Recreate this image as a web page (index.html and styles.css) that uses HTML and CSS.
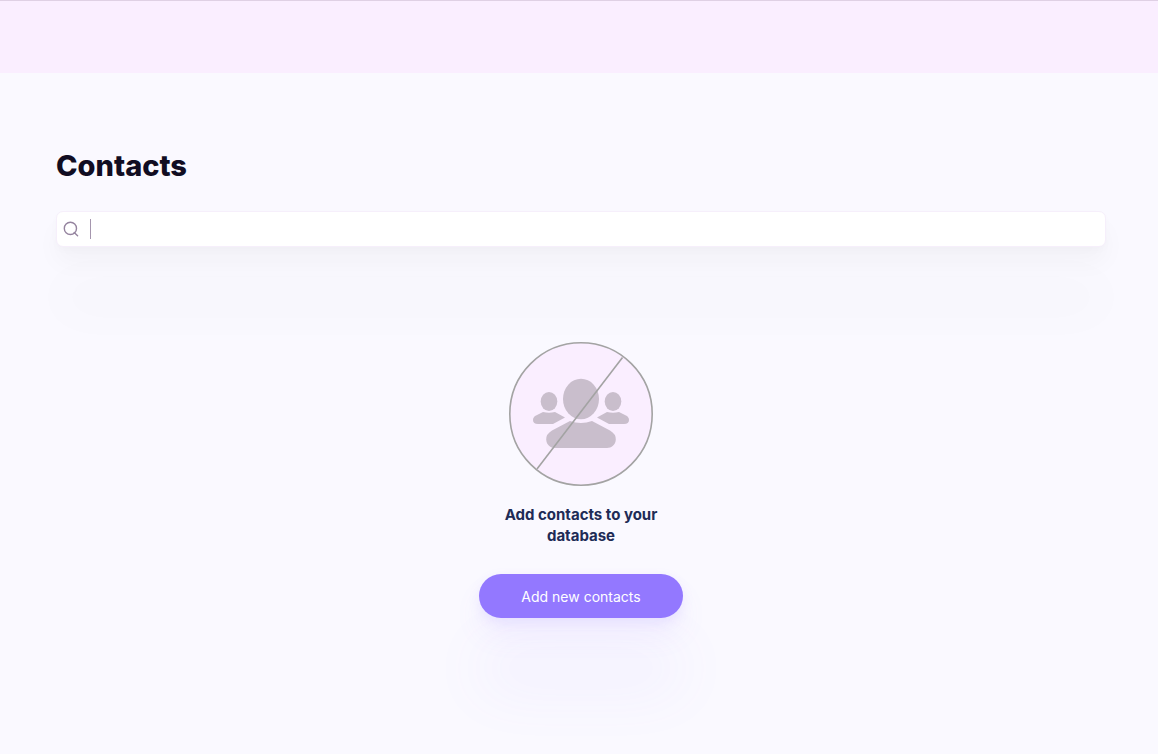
FILE: index.html
```html
<!DOCTYPE html>
<html lang="en">
<head>
<meta charset="utf-8">
<meta name="viewport" content="width=device-width, initial-scale=1">
<title>Contacts</title>
<link rel="stylesheet" href="styles.css">
</head>
<body>
<header class="topbar"></header>
<main class="page">
  <h1 class="title">Contacts</h1>
  <form class="search" role="search">
    <label class="search-label" for="search" aria-label="Search contacts">
      <svg width="16" height="16" viewBox="0 0 16 16" fill="none" stroke="#95849f" stroke-width="1.4" stroke-linecap="round">
        <circle cx="7.4" cy="7.4" r="6.1"/>
        <path d="M11.2 11.5L14.6 14.7"/>
      </svg>
    </label>
    <input class="search-input" id="search" type="text">
  </form>
  <section class="empty">
    <svg class="empty-art" width="144" height="144" viewBox="0 0 144 144" aria-hidden="true">
      <circle cx="72" cy="72" r="71.2" fill="#faeeff" stroke="#a3a3a3" stroke-width="1.6"/>
      <g fill="#c9becc">
        <ellipse cx="72" cy="57" rx="18" ry="20.3"/>
        <ellipse cx="40" cy="59.5" rx="8.3" ry="9.5"/>
        <ellipse cx="104" cy="59.5" rx="8.3" ry="9.5"/>
        <path d="M34 70Q40 71.500 46 70L56 75.500L44 82H29Q24 82 24 78Q24 75 27 73.500Z"/>
        <path d="M110 70Q104 71.500 98 70L88 75.500L100 82H115Q120 82 120 78Q120 75 117 73.500Z"/>
        <path d="M61 79Q72 83 83 79L101 88.500Q107 92 106.800 97.500C106.500 103 102.500 106 98 106H46C41.500 106 37.500 103 37.200 97.500Q37 92 43 88.500Z"/>
      </g>
      <path d="M113.500 15.500L28 127" stroke="#a3a3a3" stroke-width="1.6"/>
    </svg>
    <p class="empty-text">Add contacts to your database</p>
    <button class="add-button" type="button">Add new contacts</button>
  </section>
</main>
</body>
</html>
```
FILE: styles.css
```css
* {
  box-sizing: border-box;
}

body {
  display: flex;
  flex-direction: column;
  min-height: 100vh;
  margin: 0;
  background: #faf9ff;
  font-family: Inter, "Liberation Sans", sans-serif;
}

.topbar {
  height: 73px;
  border-top: 1px solid #dfd0e4;
  background: #faeeff;
}

.page {
  flex: 1;
  padding: 72px 52px 32px 56px;
}

.title {
  margin: 0;
  color: #110d22;
  font-size: 29px;
  font-weight: 800;
  line-height: 42px;
}

.search {
  display: flex;
  align-items: center;
  height: 36px;
  margin-top: 24px;
  padding-left: 6px;
  border: 1px solid #f6effb;
  border-radius: 7px;
  background: #fff;
  box-shadow: 0 3px 8px rgba(30, 20, 30, 0.02), 0 16px 24px rgba(30, 20, 30, 0.03), 0 68px 50px rgba(30, 20, 30, 0.02);
}

.search-label {
  display: flex;
  padding-right: 11px;
}

.search-input {
  flex: 1;
  min-width: 0;
  height: 20px;
  padding: 0 8px;
  border: 0;
  border-left: 1px solid #a596ae;
  outline: 0;
  background: transparent;
  color: #110d22;
  font: inherit;
  font-size: 14px;
}

.empty {
  display: flex;
  flex-direction: column;
  align-items: center;
  padding-top: 95px;
}

.empty-art {
  display: block;
}

.empty-text {
  width: 180px;
  margin: 18px 0 0;
  color: #202b56;
  font-size: 15px;
  font-weight: 700;
  line-height: 21px;
  text-align: center;
}

.add-button {
  margin-top: 28px;
  padding: 0 42px;
  height: 44px;
  border: 0;
  border-radius: 22px;
  background: #9378ff;
  color: #fff;
  font: inherit;
  font-size: 14px;
  box-shadow: 0 4px 12px rgba(147, 120, 255, 0.12), 0 18px 28px rgba(147, 120, 255, 0.08), 0 72px 60px rgba(147, 120, 255, 0.07);
}
```
